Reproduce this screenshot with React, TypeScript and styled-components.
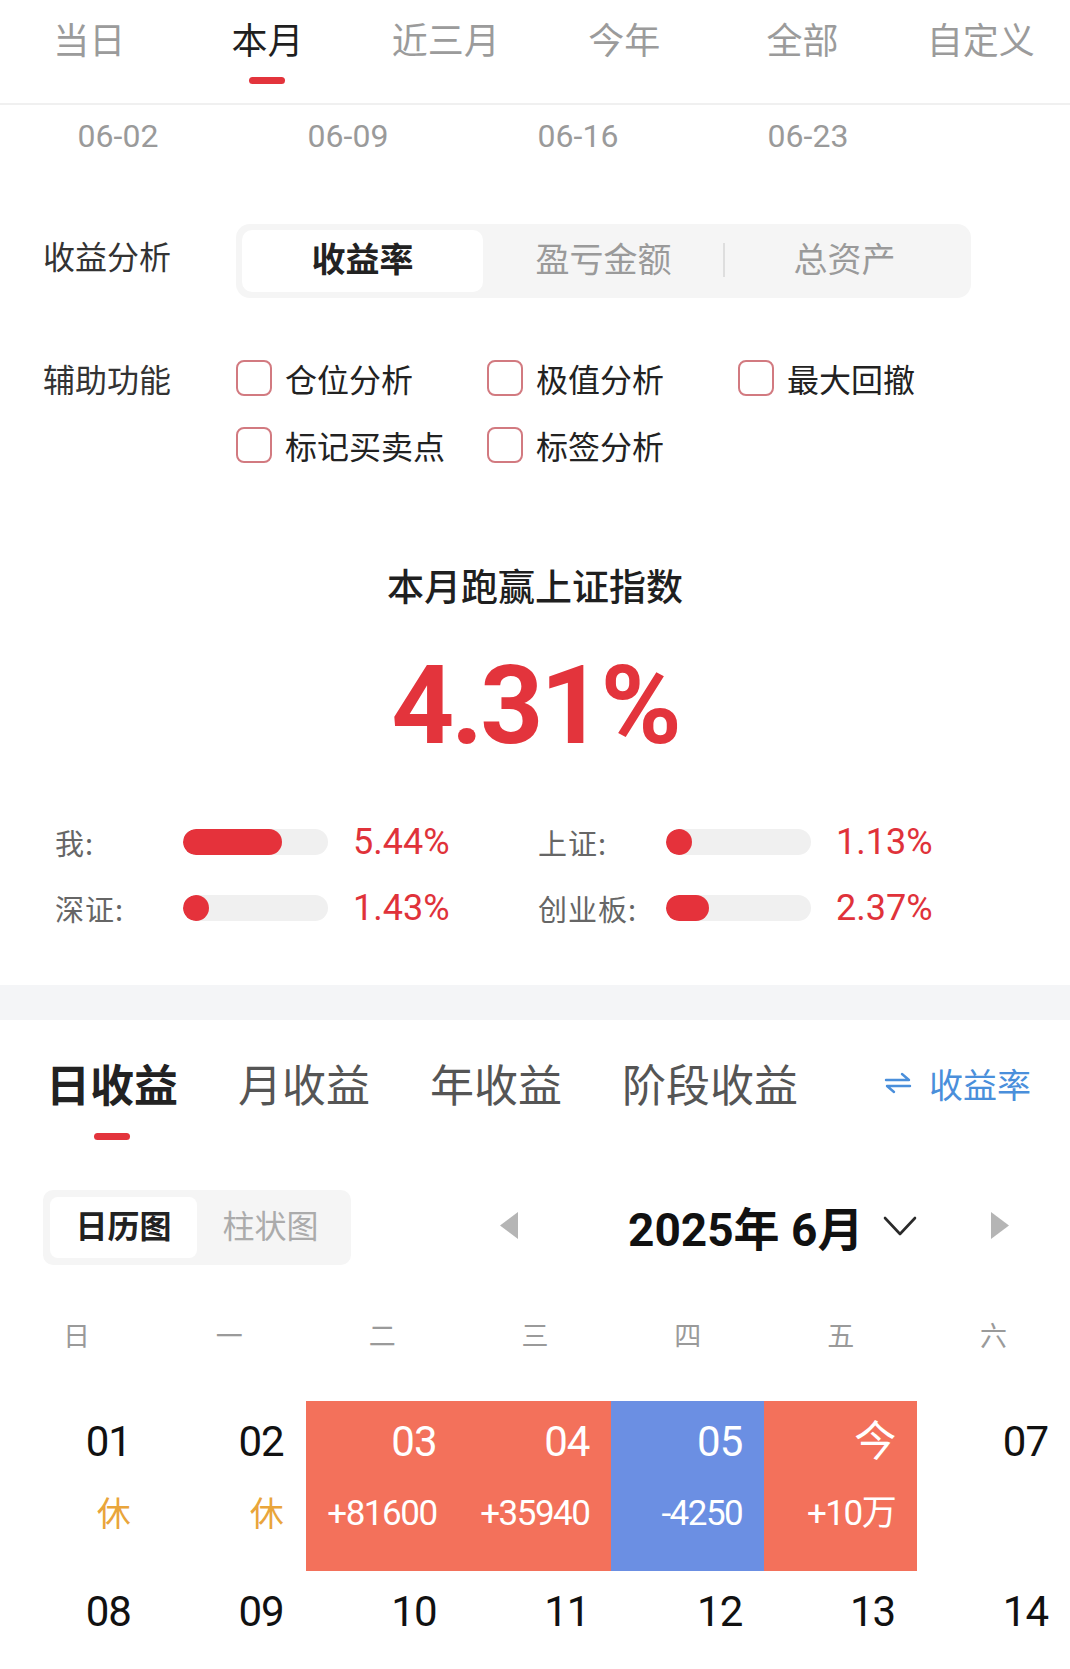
import React from 'react';
import styled, { createGlobalStyle } from 'styled-components';

const GlobalStyle = createGlobalStyle`
  html, body {
    margin: 0;
    padding: 0;
    overflow: hidden;
    background: #ffffff;
  }

  body {
    font-family: "Noto Sans CJK SC", "Noto Sans", sans-serif;
    color: #222;
  }
`;

const RED = '#e3343c';
const NUM_FONT = 'Roboto, "Noto Sans CJK SC", sans-serif';

const Page = styled.div`
  width: 1070px;
  height: 1669px;
  overflow: hidden;
  background: #fff;
`;

/* 顶部时间范围 */
const TopTabs = styled.div`
  display: grid;
  grid-template-columns: repeat(6, 1fr);
  padding: 16px 0 19px;
  border-bottom: 2px solid #f0f0f0;
`;

const TopTab = styled.div`
  display: flex;
  flex-direction: column;
  align-items: center;
`;

const TabText = styled.span<{ $active?: boolean }>`
  font-size: 36px;
  line-height: 44px;
  color: ${(p) => (p.$active ? '#1f1f1f' : '#9b9b9b')};
`;

const TabMark = styled.div<{ $show?: boolean }>`
  margin-top: 17px;
  width: 36px;
  height: 7px;
  border-radius: 4px;
  background: ${(p) => (p.$show ? RED : 'transparent')};
`;

const DateAxis = styled.div`
  display: grid;
  grid-template-columns: repeat(4, 230px);
  padding: 12px 0 0 3px;
`;

const DateLabel = styled.span`
  font-family: ${NUM_FONT};
  font-size: 32px;
  line-height: 38px;
  color: #9a9a9a;
  text-align: center;
`;

/* 收益分析 / 辅助功能 */
const SettingRow = styled.div<{ $top: number }>`
  display: flex;
  align-items: flex-start;
  margin-top: ${(p) => p.$top}px;
  padding-left: 43px;
`;

const RowLabel = styled.span<{ $offset?: number }>`
  width: 193px;
  flex-shrink: 0;
  margin-top: ${(p) => p.$offset || 0}px;
  font-size: 32px;
  line-height: 40px;
  color: #333;
`;

const Segmented = styled.div`
  box-sizing: border-box;
  width: 735px;
  height: 74px;
  padding: 6px;
  border-radius: 14px;
  background: #f5f5f5;
  display: grid;
  grid-template-columns: repeat(3, 1fr);
`;

const Segment = styled.div<{ $active?: boolean; $divider?: boolean }>`
  position: relative;
  display: flex;
  align-items: center;
  justify-content: center;
  padding-bottom: 8px;
  border-radius: 10px;
  font-size: 34px;
  background: ${(p) => (p.$active ? '#fff' : 'transparent')};
  color: ${(p) => (p.$active ? '#222' : '#9a9a9a')};
  font-weight: ${(p) => (p.$active ? 700 : 400)};

  &::before {
    content: '';
    display: ${(p) => (p.$divider ? 'block' : 'none')};
    position: absolute;
    left: -1px;
    top: 13px;
    width: 2px;
    height: 34px;
    background: #dedede;
  }
`;

const CheckGrid = styled.div`
  display: grid;
  grid-template-columns: repeat(3, 251px);
  row-gap: 27px;
`;

const CheckItem = styled.label`
  display: flex;
  align-items: center;
  gap: 13px;
  height: 40px;
  font-size: 32px;
  color: #222;
`;

const CheckBox = styled.span`
  box-sizing: border-box;
  width: 36px;
  height: 36px;
  border: 2px solid #d27a80;
  border-radius: 8px;
  background: #fff;
`;

/* 跑赢指数 */
const Summary = styled.div`
  display: flex;
  flex-direction: column;
  align-items: center;
  margin-top: 96px;
`;

const SummaryTitle = styled.div`
  font-size: 37px;
  line-height: 48px;
  font-weight: 500;
  color: #1f1f1f;
`;

const BigNumber = styled.div`
  margin-top: 42px;
  font-family: ${NUM_FONT};
  font-size: 110px;
  line-height: 110px;
  font-weight: 700;
  letter-spacing: -3px;
  color: ${RED};
`;

const CompareGrid = styled.div`
  display: grid;
  grid-template-columns: repeat(2, 483px);
  row-gap: 26px;
  margin-top: 61px;
  padding-left: 55px;
`;

const CompareItem = styled.div`
  display: flex;
  align-items: center;
  height: 40px;
`;

const CompareLabel = styled.span`
  width: 128px;
  font-size: 29px;
  color: #666;
  letter-spacing: 1px;
`;

const Track = styled.div`
  width: 145px;
  height: 26px;
  border-radius: 13px;
  background: #f0f0f0;
  overflow: hidden;
`;

const Fill = styled.div`
  height: 100%;
  border-radius: 13px;
  background: #e5323b;
`;

const CompareValue = styled.span`
  margin-left: 25px;
  font-family: ${NUM_FONT};
  font-size: 36px;
  color: #e0323a;
`;

const SectionGap = styled.div`
  margin-top: 57px;
  height: 35px;
  background: #f4f5f7;
`;

/* 日收益 tabs */
const ProfitTabs = styled.div`
  display: flex;
  align-items: flex-start;
  gap: 60px;
  padding: 35px 39px 0 46px;
`;

const ProfitTab = styled.div`
  display: flex;
  flex-direction: column;
  align-items: center;
`;

const ProfitText = styled.span<{ $active?: boolean }>`
  font-size: 44px;
  line-height: 56px;
  font-weight: ${(p) => (p.$active ? 700 : 400)};
  color: ${(p) => (p.$active ? '#222' : '#555')};
`;

const ProfitMark = styled(TabMark)`
  margin-top: 22px;
`;

const SwitchLink = styled.div`
  margin-left: auto;
  display: flex;
  align-items: center;
  gap: 17px;
  height: 56px;
  font-size: 34px;
  color: #4a8fdb;
`;

const Toolbar = styled.div`
  display: flex;
  align-items: center;
  margin-top: 50px;
  padding-left: 43px;
`;

const ViewToggle = styled.div`
  box-sizing: border-box;
  width: 308px;
  height: 75px;
  padding: 7px;
  border-radius: 10px;
  background: #f5f5f5;
  display: grid;
  grid-template-columns: repeat(2, 1fr);
`;

const ViewOption = styled.div<{ $active?: boolean }>`
  display: flex;
  align-items: center;
  justify-content: center;
  padding-bottom: 7px;
  border-radius: 8px;
  font-size: 32px;
  background: ${(p) => (p.$active ? '#fff' : 'transparent')};
  color: ${(p) => (p.$active ? '#222' : '#ababab')};
  font-weight: ${(p) => (p.$active ? 700 : 400)};
`;

const MonthNav = styled.div`
  display: flex;
  align-items: center;
  margin-left: 149px;
  padding-bottom: 4px;
`;

const MonthTitle = styled.span`
  margin-left: 110px;
  font-family: ${NUM_FONT};
  font-size: 46px;
  font-weight: 700;
  color: #111;
`;

const Chevron = styled.svg`
  margin-left: 20px;
`;

const RightArrow = styled.svg`
  margin-left: 74px;
`;

/* 日历 */
const WeekHeader = styled.div`
  display: grid;
  grid-template-columns: repeat(7, 1fr);
  margin-top: 52px;
`;

const WeekDay = styled.span`
  font-size: 27px;
  line-height: 36px;
  color: #9a9a9a;
  text-align: center;
`;

const CalendarGrid = styled.div`
  display: grid;
  grid-template-columns: repeat(7, 1fr);
  margin-top: 48px;
`;

const toneBg: Record<string, string> = {
  up: '#f3715b',
  down: '#6b8fe3',
  none: 'transparent',
};

const DayCell = styled.div<{ $tone: string }>`
  box-sizing: border-box;
  height: 170px;
  padding: 19px 22px 0 0;
  text-align: right;
  background: ${(p) => toneBg[p.$tone]};
  color: ${(p) => (p.$tone === 'none' ? '#111' : '#fff')};
`;

const DayNum = styled.div`
  font-family: ${NUM_FONT};
  font-size: 42px;
  line-height: 44px;
  letter-spacing: -1px;
`;

const DayInfo = styled.div<{ $rest?: boolean }>`
  margin-top: 30px;
  font-family: ${NUM_FONT};
  font-size: ${(p) => (p.$rest ? 34 : 35)}px;
  line-height: 40px;
  letter-spacing: ${(p) => (p.$rest ? 0 : -1.5)}px;
  color: ${(p) => (p.$rest ? '#e9a53b' : 'inherit')};
`;

const ranges = ['当日', '本月', '近三月', '今年', '全部', '自定义'];
const dates = ['06-02', '06-09', '06-16', '06-23'];
const checks = ['仓位分析', '极值分析', '最大回撤', '标记买卖点', '标签分析'];
const compares = [
  { label: '我:', value: 5.44 },
  { label: '上证:', value: 1.13 },
  { label: '深证:', value: 1.43 },
  { label: '创业板:', value: 2.37 },
];
const profitTabs = ['日收益', '月收益', '年收益', '阶段收益'];
const weekDays = ['日', '一', '二', '三', '四', '五', '六'];

type Day = { num: string; info?: string; tone: string; rest?: boolean };

const days: Day[] = [
  { num: '01', info: '休', tone: 'none', rest: true },
  { num: '02', info: '休', tone: 'none', rest: true },
  { num: '03', info: '+81600', tone: 'up' },
  { num: '04', info: '+35940', tone: 'up' },
  { num: '05', info: '-4250', tone: 'down' },
  { num: '今', info: '+10万', tone: 'up' },
  { num: '07', tone: 'none' },
  { num: '08', tone: 'none' },
  { num: '09', tone: 'none' },
  { num: '10', tone: 'none' },
  { num: '11', tone: 'none' },
  { num: '12', tone: 'none' },
  { num: '13', tone: 'none' },
  { num: '14', tone: 'none' },
];

const SwapIcon = () => (
  <svg width="28" height="22" viewBox="0 0 28 22" fill="none" stroke="#4a8fdb" strokeWidth="2.4" strokeLinecap="round" strokeLinejoin="round">
    <path d="M2 8 H25 L18 2" />
    <path d="M26 14 H3 L10 20" />
  </svg>
);

const App = () => {
  return (
    <Page>
      <GlobalStyle />

      <TopTabs>
        {ranges.map((r) => (
          <TopTab key={r}>
            <TabText $active={r === '本月'}>{r}</TabText>
            <TabMark $show={r === '本月'} />
          </TopTab>
        ))}
      </TopTabs>

      <DateAxis>
        {dates.map((d) => (
          <DateLabel key={d}>{d}</DateLabel>
        ))}
      </DateAxis>

      <SettingRow $top={69}>
        <RowLabel $offset={11}>收益分析</RowLabel>
        <Segmented>
          <Segment $active>收益率</Segment>
          <Segment>盈亏金额</Segment>
          <Segment $divider>总资产</Segment>
        </Segmented>
      </SettingRow>

      <SettingRow $top={60}>
        <RowLabel>辅助功能</RowLabel>
        <CheckGrid>
          {checks.map((c) => (
            <CheckItem key={c}>
              <CheckBox />
              {c}
            </CheckItem>
          ))}
        </CheckGrid>
      </SettingRow>

      <Summary>
        <SummaryTitle>本月跑赢上证指数</SummaryTitle>
        <BigNumber>4.31%</BigNumber>
      </Summary>

      <CompareGrid>
        {compares.map((c) => (
          <CompareItem key={c.label}>
            <CompareLabel>{c.label}</CompareLabel>
            <Track>
              <Fill style={{ width: Math.max(26, c.value * 18.2) }} />
            </Track>
            <CompareValue>{c.value.toFixed(2)}%</CompareValue>
          </CompareItem>
        ))}
      </CompareGrid>

      <SectionGap />

      <ProfitTabs>
        {profitTabs.map((t) => (
          <ProfitTab key={t}>
            <ProfitText $active={t === '日收益'}>{t}</ProfitText>
            <ProfitMark $show={t === '日收益'} />
          </ProfitTab>
        ))}
        <SwitchLink>
          <SwapIcon />
          收益率
        </SwitchLink>
      </ProfitTabs>

      <Toolbar>
        <ViewToggle>
          <ViewOption $active>日历图</ViewOption>
          <ViewOption>柱状图</ViewOption>
        </ViewToggle>
        <MonthNav>
          <svg width="18" height="27" viewBox="0 0 18 27">
            <path d="M18 0 V27 L0 13.5 Z" fill="#b5b5b5" />
          </svg>
          <MonthTitle>2025年 6月</MonthTitle>
          <Chevron width="34" height="22" viewBox="0 0 34 22" fill="none" stroke="#2a2a2a" strokeWidth="2.6" strokeLinecap="round" strokeLinejoin="round">
            <path d="M2 3 L17 19 L32 3" />
          </Chevron>
          <RightArrow width="18" height="27" viewBox="0 0 18 27">
            <path d="M0 0 V27 L18 13.5 Z" fill="#b5b5b5" />
          </RightArrow>
        </MonthNav>
      </Toolbar>

      <WeekHeader>
        {weekDays.map((w) => (
          <WeekDay key={w}>{w}</WeekDay>
        ))}
      </WeekHeader>

      <CalendarGrid>
        {days.map((d) => (
          <DayCell key={d.num} $tone={d.tone}>
            <DayNum>{d.num}</DayNum>
            {d.info && <DayInfo $rest={d.rest}>{d.info}</DayInfo>}
          </DayCell>
        ))}
      </CalendarGrid>
    </Page>
  );
};

export default App;
